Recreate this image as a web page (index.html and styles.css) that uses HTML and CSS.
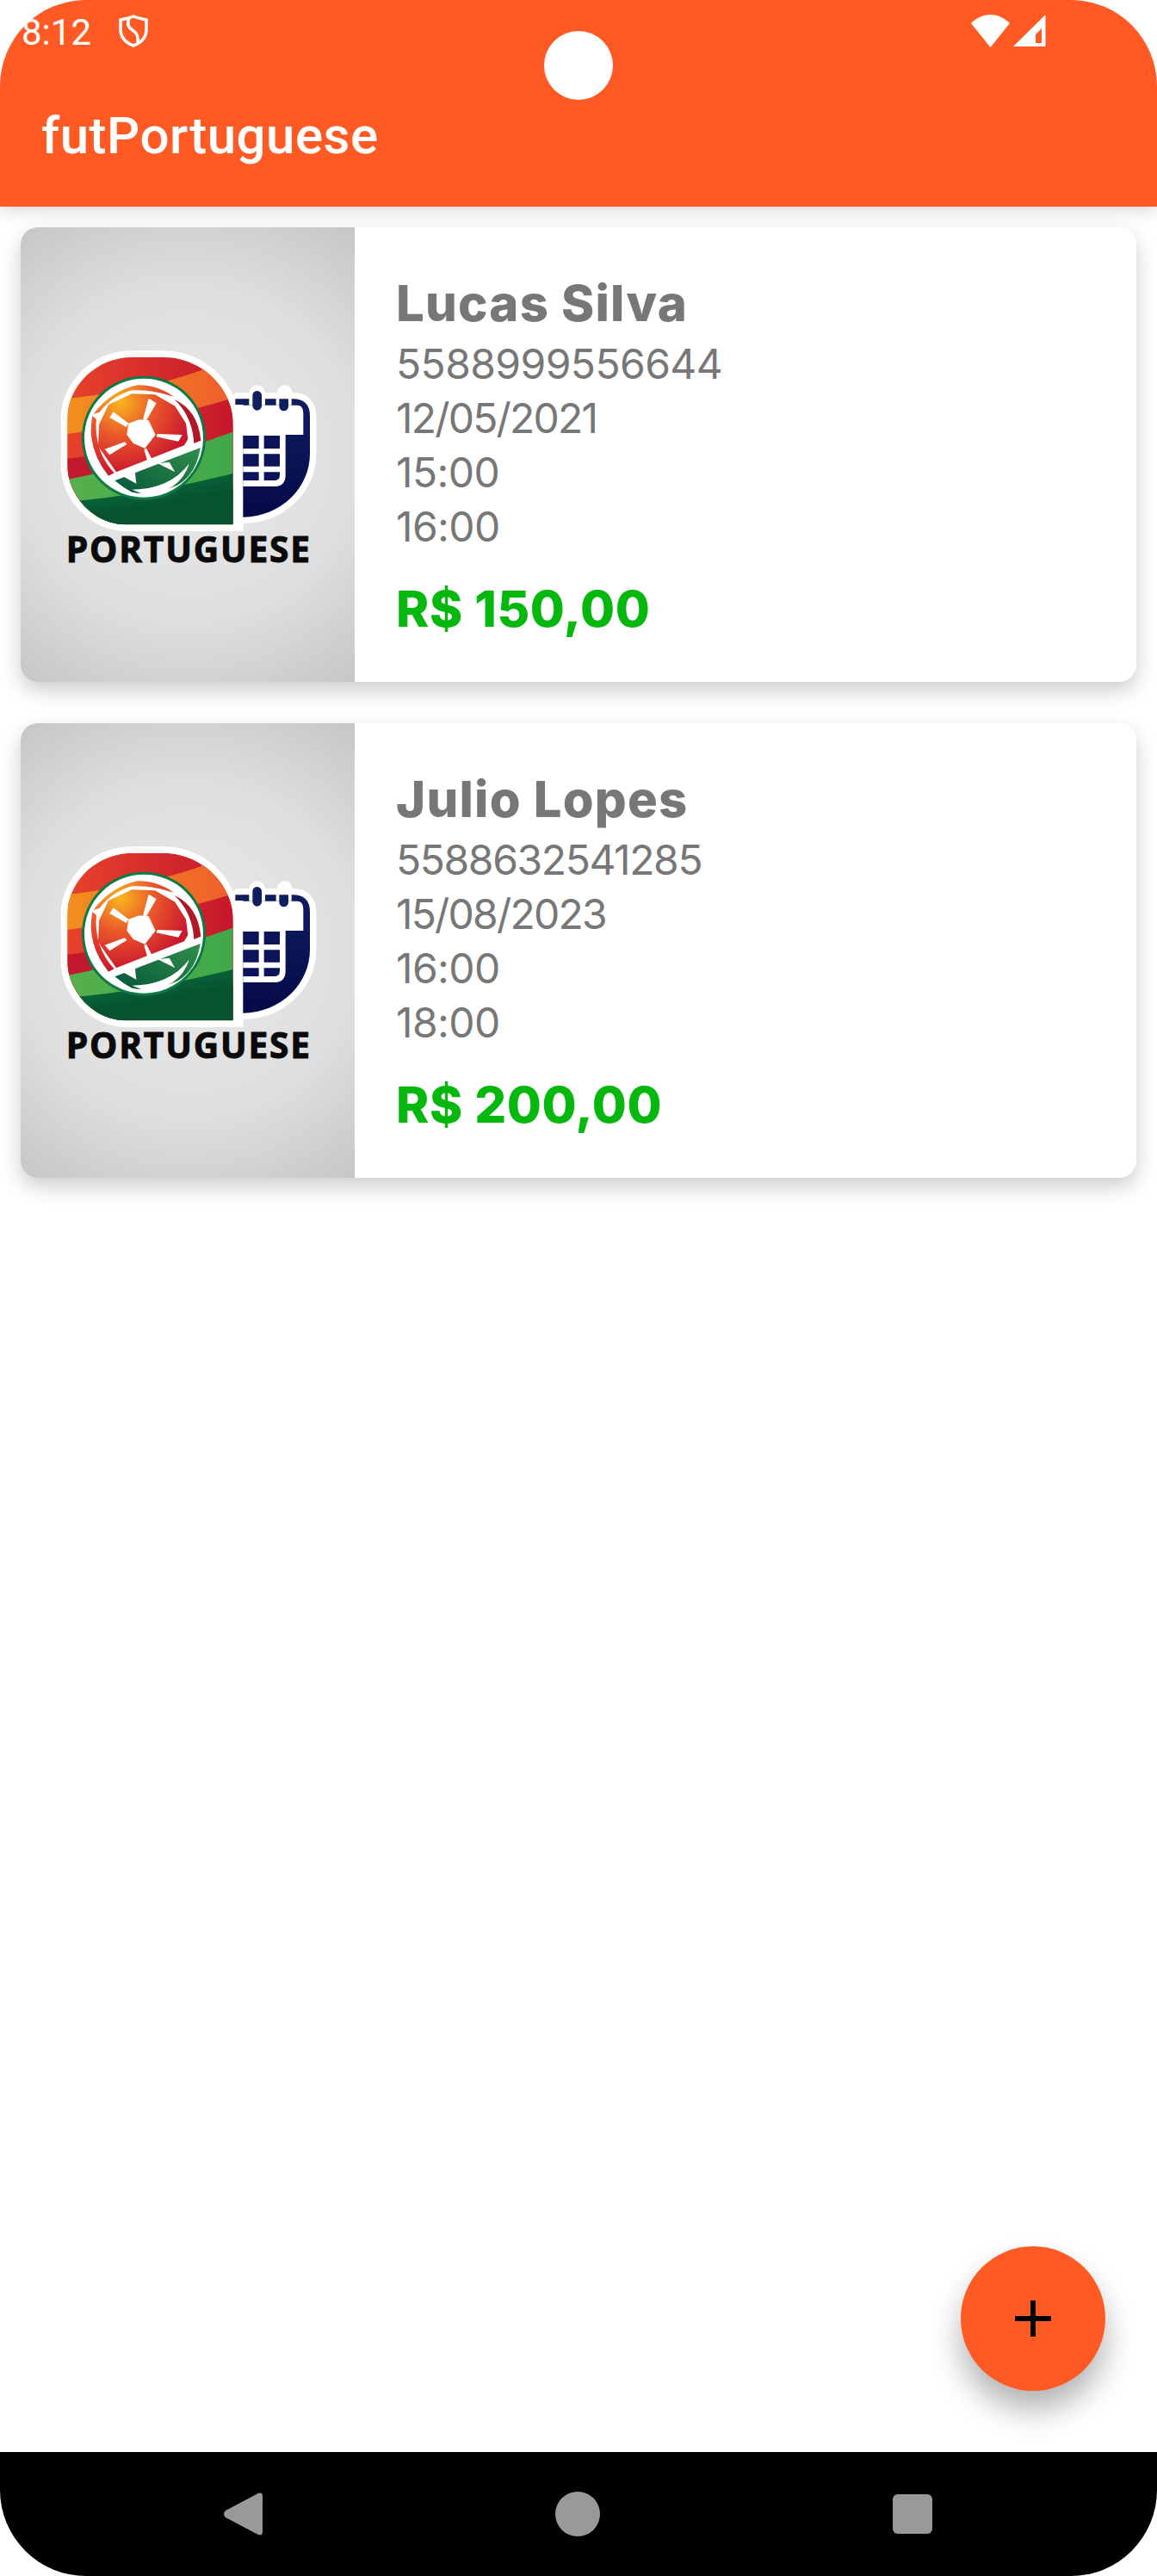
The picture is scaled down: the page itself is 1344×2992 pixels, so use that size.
FILE: index.html
```html
<!DOCTYPE html>
<html lang="pt-BR">
<head>
    <meta charset="UTF-8">
    <meta name="viewport" content="width=device-width, initial-scale=1.0">
    <title>futPortuguese</title>
    <link rel="stylesheet" href="styles.css">
</head>
<body>

<!-- Shared logo artwork, used by every card -->
<svg class="logo-defs" width="0" height="0" aria-hidden="true">
    <defs>
        <linearGradient id="bandRed" x1="0" y1="0" x2="1" y2="0">
            <stop offset="0" stop-color="#e8452b"/><stop offset="1" stop-color="#c5152c"/>
        </linearGradient>
        <linearGradient id="bandOrange" x1="0" y1="0" x2="1" y2="0">
            <stop offset="0" stop-color="#f3911f"/><stop offset="1" stop-color="#ee5d2a"/>
        </linearGradient>
        <linearGradient id="bandGreen" x1="0" y1="0" x2="1" y2="0">
            <stop offset="0" stop-color="#56b04c"/><stop offset="1" stop-color="#3fa84a"/>
        </linearGradient>
        <linearGradient id="bandDark" x1="0" y1="0" x2="0.6" y2="1">
            <stop offset="0" stop-color="#0b7a40"/><stop offset="1" stop-color="#03402a"/>
        </linearGradient>
        <linearGradient id="navy" x1="0" y1="0" x2="0" y2="1">
            <stop offset="0" stop-color="#101d60"/><stop offset="1" stop-color="#050a48"/>
        </linearGradient>
        <linearGradient id="ballGreen" x1="1" y1="0" x2="0" y2="1">
            <stop offset="0" stop-color="#2f8f48"/><stop offset="1" stop-color="#06563a"/>
        </linearGradient>
        <radialGradient id="ballFill" gradientUnits="userSpaceOnUse" cx="360" cy="290" r="290">
            <stop offset="0" stop-color="#f9b61f"/><stop offset="0.4" stop-color="#ea5a2a"/><stop offset="0.85" stop-color="#cc1a2d"/>
        </radialGradient>
        <clipPath id="shieldClip">
            <path d="M752 718H380C270 718 175 620 175 510V350C175 230 280 135 400 135H510C640 135 752 240 752 370Z"/>
        </clipPath>
        <symbol id="logoArt" viewBox="12 -318 1164 1584">
            <!-- white outline -->
            <path d="M752 718H380C270 718 175 620 175 510V350C175 230 280 135 400 135H510C640 135 752 240 752 370Z" fill="#fff" stroke="#fff" stroke-width="46" stroke-linejoin="round"/>
            <rect x="752" y="400" width="36" height="340" fill="#fff"/>
            <path d="M770 692V280H960Q1020 280 1020 340V470C1020 590 920 690 787 692Z" fill="#fff" stroke="#fff" stroke-width="44" stroke-linejoin="round"/>
            <circle cx="836" cy="258" r="26" fill="#fff"/>
            <circle cx="932" cy="258" r="26" fill="#fff"/>

            <!-- colour bands -->
            <g clip-path="url(#shieldClip)">
                <rect x="150" y="120" width="620" height="620" fill="url(#bandRed)"/>
                <path d="M150 282C300 265 500 235 650 176L770 150V740H150Z" fill="url(#bandOrange)"/>
                <path d="M150 405C350 380 560 335 770 272V740H150Z" fill="url(#bandRed)"/>
                <path d="M150 490C260 480 300 470 400 450L400 740H150Z" fill="#c3192f"/>
                <path d="M150 565C350 530 560 465 770 388V740H150Z" fill="url(#bandGreen)"/>
                <path d="M150 640C350 625 560 590 770 535V740H150Z" fill="url(#bandDark)"/>
                <path d="M150 680C350 665 560 640 770 590V740H150Z" fill="#055331"/>
            </g>

            <!-- ball -->
            <circle cx="441" cy="416" r="216" fill="#0c7a45"/>
            <circle cx="441" cy="416" r="207" fill="#fff"/>
            <path d="M266 332Q330 250 420 232Q490 232 545 272Q470 246 400 250Q330 270 286 327Z" fill="url(#ballFill)"/>
            <path d="M262 340Q240 450 318 548L338 538Q266 460 276 350Z" fill="url(#ballFill)"/>
            <path d="M548 282Q630 320 640 425L616 435Q610 340 548 282Z" fill="#b01828"/>
            <path d="M318 300L400 262L480 265L550 305L588 365L595 420L582 442L345 535L282 445L285 370Z" fill="url(#ballFill)"/>
            <path d="M340 565L638 450Q625 540 560 580Q470 620 400 605Q370 590 340 565Z" fill="url(#ballGreen)"/>
            <path d="M400 596Q530 596 600 505Q565 610 440 612Z" fill="#fff"/>
            <path d="M360 545L415 575L410 530ZM490 505L550 535L530 500Z" fill="#fff"/>
            <path d="M425 352L458 355L482 405L445 452L405 435L382 405L388 365Z" fill="#fff"/>
            <path d="M458 278L485 295L450 355L438 352ZM335 325L322 345L380 378L388 365ZM575 405L562 428L485 412L488 402ZM305 455L322 475L382 438L375 430ZM442 455L450 452L472 495L455 502Z" fill="#fff"/>

            <!-- calendar -->
            <path d="M787 692V300H760V280H960Q1020 280 1020 340V470C1020 590 920 690 787 692Z" fill="url(#navy)"/>
            <path d="M755 302H975Q997 302 997 330V405H935V545Q935 585 895 585H787V405H755Z" fill="#fff"/>
            <path d="M787 408H842V453H787ZM860 408H915V453H860ZM787 472H842V515H787ZM860 472H915V515H860ZM787 535H842V564H787ZM860 535H915V545Q915 564 895 564H860Z" fill="#0b1458"/>
            <rect x="808" y="272" width="56" height="30" fill="#fff"/>
            <rect x="902" y="272" width="54" height="30" fill="#fff"/>
            <rect x="820" y="252" width="32" height="68" rx="16" fill="#0f1f5e"/>
            <path d="M913 280H945V306A16 16 0 0 1 913 306Z" fill="#0f1f5e"/>
        </symbol>
    </defs>
</svg>

<div class="phone">
    <header class="app-header">
        <div class="status-bar">
            <span class="clock">8:12</span>
            <svg class="shield-icon" width="34" height="38" viewBox="0 0 34 38">
                <path d="M17 2C12 4 6 5 2 6V17C2 27 9 33 17 36C25 33 32 27 32 17V6C28 5 22 4 17 2Z" fill="none" stroke="#fff" stroke-width="3.5"/>
                <path d="M12 4C9 11 11 15 16 18C21 21 23 27 22 33" fill="none" stroke="#fff" stroke-width="3.5"/>
            </svg>
            <div class="status-right">
                <svg width="45" height="38" viewBox="0 0 45 38">
                    <path d="M22.500 38L0 10C6 4 14 0 22.500 0C31 0 39 4 45 10Z" fill="#fff"/>
                </svg>
                <svg width="38" height="38" viewBox="0 0 38 38">
                    <path d="M37.500 0V37H0ZM26 23V33H33V16Z" fill="#fff" fill-rule="evenodd"/>
                </svg>
            </div>
        </div>
        <h1 class="app-title">futPortuguese</h1>
    </header>
    <div class="camera"></div>

    <main class="booking-list">
        <article class="card">
            <div class="card-image">
                <svg class="logo" width="388" height="528" viewBox="12 -318 1164 1584">
                    <use href="#logoArt" x="12" y="-318" width="1164" height="1584"/>
                    <text class="logo-text" x="170" y="848" textLength="850">PORTUGUESE</text>
                </svg>
            </div>
            <div class="card-body">
                <h2 class="client-name">Lucas Silva</h2>
                <p class="card-line">5588999556644</p>
                <p class="card-line card-date">12/05/2021</p>
                <p class="card-line">15:00</p>
                <p class="card-line">16:00</p>
                <p class="price">R$ 150,00</p>
            </div>
        </article>

        <article class="card">
            <div class="card-image">
                <svg class="logo" width="388" height="528" viewBox="12 -318 1164 1584">
                    <use href="#logoArt" x="12" y="-318" width="1164" height="1584"/>
                    <text class="logo-text" x="170" y="848" textLength="850">PORTUGUESE</text>
                </svg>
            </div>
            <div class="card-body">
                <h2 class="client-name">Julio Lopes</h2>
                <p class="card-line card-phone">5588632541285</p>
                <p class="card-line card-date">15/08/2023</p>
                <p class="card-line">16:00</p>
                <p class="card-line">18:00</p>
                <p class="price">R$ 200,00</p>
            </div>
        </article>
    </main>

    <button class="fab" aria-label="Adicionar">
        <svg width="42" height="42" viewBox="0 0 42 42">
            <path d="M21 0V42M0 21H42" stroke="#000" stroke-width="6"/>
        </svg>
    </button>

    <nav class="nav-bar">
        <svg width="46" height="52" viewBox="0 0 46 52">
            <path d="M39 3Q46 -1 46 6V46Q46 53 39 49L3 30Q-1 26 3 22Z" fill="#999"/>
        </svg>
        <div class="nav-home"></div>
        <div class="nav-recent"></div>
    </nav>
</div>

</body>
</html>
```

FILE: styles.css
```css
/* Page and device frame */
body {
    margin: 0;
    background: #fff;
    font-family: Inter, "Liberation Sans", sans-serif;
}

.logo-defs {
    display: block;
    position: absolute;
}

.phone {
    position: relative;
    width: 1344px;
    height: 2992px;
    display: flex;
    flex-direction: column;
    overflow: hidden;
    border-radius: 100px;
    background: #fff;
}

/* Orange app header with status bar */
.app-header {
    position: relative;
    z-index: 1;
    height: 240px;
    flex-shrink: 0;
    box-sizing: border-box;
    background: #ff5a24;
    color: #fff;
    box-shadow: 0 4px 20px rgba(0, 0, 0, 0.16);
    font-family: Roboto, sans-serif;
}

.status-bar {
    display: flex;
    height: 76px;
    padding: 0 129px 0 25px;
    align-items: center;
}

.clock {
    font-size: 42px;
    line-height: 76px;
}

.shield-icon {
    margin: 0 0 4px 32px;
}

.status-right {
    display: flex;
    gap: 4px;
    margin: 0 0 4px auto;
}

.app-title {
    margin: 46px 0 0 48px;
    font-size: 60px;
    font-weight: 500;
    line-height: 72px;
    letter-spacing: 0.5px;
}

.camera {
    position: absolute;
    z-index: 2;
    top: 36px;
    left: 632px;
    width: 80px;
    height: 80px;
    border-radius: 50%;
    background: #fff;
}

/* Booking cards */
.booking-list {
    flex: 1;
    display: flex;
    flex-direction: column;
    gap: 48px;
    padding: 24px;
}

.card {
    display: flex;
    height: 528px;
    border-radius: 20px;
    overflow: hidden;
    background: #fff;
    box-shadow: 0 10px 24px rgba(0, 0, 0, 0.2);
}

.card-image {
    width: 388px;
    flex-shrink: 0;
    background: radial-gradient(circle at 50% 50%, #ebebeb 0, #dedede 60%, #c6c6c6 100%);
}

.logo {
    display: block;
}

.logo-text {
    font-family: "Open Sans", sans-serif;
    font-size: 122px;
    font-weight: 700;
    fill: #0a0a0a;
    stroke: #0a0a0a;
    stroke-width: 3px;
}

.card-body {
    padding: 49px 0 0 48px;
    color: #777;
}

.client-name {
    margin: 0;
    font-size: 58px;
    font-weight: 800;
    line-height: 78px;
    letter-spacing: 1.2px;
}

.card-line {
    margin: 0;
    font-size: 48px;
    line-height: 63px;
    letter-spacing: -0.6px;
}

.card-date {
    letter-spacing: -1.8px;
}

.card-phone {
    letter-spacing: -1.4px;
}

.price {
    margin: 25px 0 0;
    font-size: 58px;
    font-weight: 800;
    line-height: 78px;
    letter-spacing: 0.6px;
    color: #06b80e;
}

/* Floating add button */
.fab {
    position: absolute;
    right: 60px;
    bottom: 215px;
    width: 168px;
    height: 168px;
    padding: 0;
    display: flex;
    align-items: center;
    justify-content: center;
    border: none;
    border-radius: 50%;
    background: #ff5a24;
    box-shadow: 0 22px 36px rgba(0, 0, 0, 0.3);
}

/* Android navigation bar */
.nav-bar {
    height: 144px;
    flex-shrink: 0;
    display: flex;
    align-items: center;
    justify-content: space-between;
    padding: 0 261px 0 259px;
    background: #000;
}

.nav-home {
    width: 52px;
    height: 52px;
    border-radius: 50%;
    background: #999;
}

.nav-recent {
    width: 46px;
    height: 46px;
    border-radius: 6px;
    background: #999;
}
```
